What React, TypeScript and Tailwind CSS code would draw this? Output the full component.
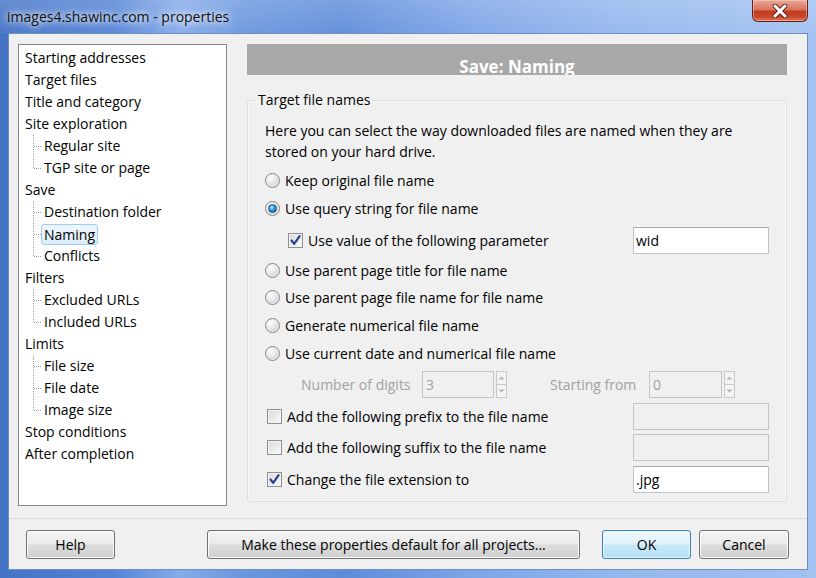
import React from "react";

type Node = { t: string; c?: string[] };

const tree: Node[] = [
  { t: "Starting addresses" },
  { t: "Target files" },
  { t: "Title and category" },
  { t: "Site exploration", c: ["Regular site", "TGP site or page"] },
  { t: "Save", c: ["Destination folder", "Naming", "Conflicts"] },
  { t: "Filters", c: ["Excluded URLs", "Included URLs"] },
  { t: "Limits", c: ["File size", "File date", "Image size"] },
  { t: "Stop conditions" },
  { t: "After completion" },
];

function Connector({ last }: { last: boolean }) {
  return (
    <svg width="19" height="22" viewBox="0 0 19 22" className="shrink-0">
      <line x1="8.5" y1="0" x2="8.5" y2={last ? 11.5 : 22} stroke="#a0a0a0" strokeDasharray="1 1" />
      <line x1="9" y1="11.5" x2="17" y2="11.5" stroke="#a0a0a0" strokeDasharray="1 1" />
    </svg>
  );
}

function Radio({ checked }: { checked?: boolean }) {
  return (
    <span className="w-[15px] h-[15px] rounded-full border border-[#848585] bg-[radial-gradient(circle_at_35%_30%,#ffffff_0%,#e6e6e6_45%,#c2c2c2_100%)] flex items-center justify-center shrink-0 shadow-[inset_0_0_0_1px_#f2f2f2]">
      {checked && (
        <span className="w-[9px] h-[9px] rounded-full bg-[radial-gradient(circle_at_40%_35%,#b6ecff_0%,#3aa0dc_40%,#0f4f90_100%)] border border-[#1d4f86]" />
      )}
    </span>
  );
}

function Check({ checked }: { checked?: boolean }) {
  return (
    <span className="w-[15px] h-[15px] border border-[#8e8f8f] bg-[linear-gradient(135deg,#d9d9d9_0%,#ededed_60%,#fbfbfb_100%)] shadow-[inset_0_0_0_1px_#f4f4f4] flex items-center justify-center shrink-0">
      {checked && (
        <svg width="13" height="13" viewBox="0 0 13 13">
          <path d="M2.5 6.5 L5.2 9.8 L10.6 2.2" fill="none" stroke="#26448c" strokeWidth="2.2" strokeLinecap="round" strokeLinejoin="round" />
        </svg>
      )}
    </span>
  );
}

function TextBox({ value, disabled }: { value?: string; disabled?: boolean }) {
  return (
    <div
      className={
        "w-[136px] h-[27px] border flex items-center pl-[2px] text-[14px] " +
        (disabled ? "bg-[#f0f0f0] border-[#c5c5c5]" : "bg-white border-[#c0c4c8] border-t-[#a6aab0]")
      }
    >
      {value}
    </div>
  );
}

function Spin() {
  return (
    <div className="w-[11px] h-[27px] flex flex-col ml-[2px]">
      <div className="flex-1 border border-[#c9c9c9] bg-[#f4f4f4] flex items-center justify-center">
        <svg width="7" height="4" viewBox="0 0 7 4">
          <path d="M0.5 3.5 L3.5 0.5 L6.5 3.5 Z" fill="#b5b5b5" />
        </svg>
      </div>
      <div className="flex-1 border border-t-0 border-[#c9c9c9] bg-[#f4f4f4] flex items-center justify-center">
        <svg width="7" height="4" viewBox="0 0 7 4">
          <path d="M0.5 0.5 L3.5 3.5 L6.5 0.5 Z" fill="#b5b5b5" />
        </svg>
      </div>
    </div>
  );
}

function RadioRow({ label, checked, h }: { label: string; checked?: boolean; h: string }) {
  return (
    <div className={"flex items-center " + h}>
      <Radio checked={checked} />
      <span className="ml-[5px]">{label}</span>
    </div>
  );
}

function Button({ label, w, def }: { label: string; w: string; def?: boolean }) {
  return (
    <div
      className={
        "h-[29px] rounded-[3px] border flex items-center justify-center text-[14px] " +
        w +
        " " +
        (def
          ? "border-[#3c7fb1] bg-[linear-gradient(180deg,#eef8fd_0%,#e0f2fc_48%,#c8e8fa_52%,#b4dff6_100%)] shadow-[inset_0_0_0_1px_#e8f6fe]"
          : "border-[#707070] bg-[linear-gradient(180deg,#f3f3f3_0%,#ebebeb_48%,#dddddd_52%,#cfcfcf_100%)] shadow-[inset_0_0_0_1px_#fbfbfb]")
      }
    >
      {label}
    </div>
  );
}

export default function App() {
  return (
    <div className="w-[816px] h-[578px] overflow-hidden flex flex-col font-['Open_Sans',sans-serif] text-[14px] text-black bg-[linear-gradient(90deg,#4473c6_0%,#5584d6_14%,#86abe9_22%,#6a96de_30%,#5e8cda_42%,#7ea5e8_58%,#94b7ee_76%,#a3c1f1_100%)]">
      {/* Title bar */}
      <div className="h-[33px] flex shrink-0 bg-[linear-gradient(180deg,rgba(255,255,255,0.18)_0%,rgba(255,255,255,0.05)_100%)]">
        <div className="pl-[7px] pt-[6px] text-[14px] leading-[22px] text-[#111] [text-shadow:0_0_6px_#ffffff,0_0_10px_rgba(255,255,255,0.8)]">
          images4.shawinc.com - properties
        </div>
        <div className="ml-auto mr-[8px] w-[56px] h-[22px] rounded-b-[6px] border border-t-0 border-[#6b1f17] bg-[linear-gradient(180deg,#e9a99a_0%,#d9755f_45%,#c13a22_55%,#c8482d_80%,#e07a58_100%)] shadow-[inset_0_0_0_1px_rgba(255,210,200,0.5)] flex items-center justify-center">
          <svg width="16" height="14" viewBox="0 0 16 14">
            <path d="M3 2 L13 12 M13 2 L3 12" stroke="#5a1a12" strokeWidth="4.6" strokeLinecap="round" />
            <path d="M3 2 L13 12 M13 2 L3 12" stroke="#ffffff" strokeWidth="3" strokeLinecap="round" />
          </svg>
        </div>
      </div>

      {/* Client area */}
      <div className="mx-[8px] mb-[8px] flex-1 bg-[#f0f0f0] border border-[#6f8fc4] flex flex-col">
        <div className="flex pt-[10px] pl-[9px]">
          {/* Tree */}
          <div className="w-[209px] h-[462px] bg-white border border-[#828790] pl-[6px] pt-[2px] leading-[22px]">
            {tree.map((n) => (
              <div key={n.t}>
                <div className="h-[22px]">{n.t}</div>
                {n.c?.map((ch, i) => (
                  <div key={ch} className="flex h-[22px] items-center">
                    <Connector last={i === n.c!.length - 1} />
                    {ch === "Naming" ? (
                      <span className="-ml-[3px] h-[21px] leading-[19px] px-[2px] border border-[#9fcdee] rounded-[3px] bg-[linear-gradient(180deg,#eef7fd_0%,#dcedfa_100%)]">
                        {ch}
                      </span>
                    ) : (
                      <span>{ch}</span>
                    )}
                  </div>
                ))}
              </div>
            ))}
          </div>

          {/* Right panel */}
          <div className="ml-[20px] w-[540px] flex flex-col">
            <div className="h-[31px] bg-[#a8a8a8] overflow-hidden text-center text-white font-bold text-[17px] leading-[24px] pt-[11px]">
              Save: Naming
            </div>
            <fieldset className="mt-[15px] h-[412px] border border-[#d5dfe5] rounded-[3px] shadow-[inset_0_0_0_1px_#fbfbfb]">
              <legend className="ml-[8px] px-[2px] leading-[20px]">Target file names</legend>
              <div className="pl-[17px]">
                <div className="mt-[10px] leading-[21px] w-[500px]">
                  Here you can select the way downloaded files are named when they are stored on your hard drive.
                </div>
                <div className="mt-[4px]">
                  <RadioRow label="Keep original file name" h="h-[28px]" />
                  <RadioRow label="Use query string for file name" checked h="h-[28px]" />
                  <div className="flex items-center h-[36px] pl-[23px]">
                    <Check checked />
                    <span className="ml-[5px] w-[325px]">Use value of the following parameter</span>
                    <TextBox value="wid" />
                  </div>
                  <RadioRow label="Use parent page title for file name" h="h-[25px]" />
                  <RadioRow label="Use parent page file name for file name" h="h-[28px]" />
                  <RadioRow label="Generate numerical file name" h="h-[28px]" />
                  <RadioRow label="Use current date and numerical file name" h="h-[29px]" />
                  <div className="flex items-center h-[32px] pl-[36px] text-[#a2a2a2]">
                    <span className="w-[121px]">Number of digits</span>
                    <div className="w-[72px] h-[27px] border border-[#c3c6c9] bg-[#f0f0f0] pl-[3px] flex items-center">3</div>
                    <Spin />
                    <span className="ml-[43px] w-[99px]">Starting from</span>
                    <div className="w-[73px] h-[27px] border border-[#c3c6c9] bg-[#f0f0f0] pl-[3px] flex items-center">0</div>
                    <Spin />
                  </div>
                  <div className="flex items-center h-[33px] pl-[2px]">
                    <Check />
                    <span className="ml-[5px] w-[346px]">Add the following prefix to the file name</span>
                    <TextBox disabled />
                  </div>
                  <div className="flex items-center h-[28px] pl-[2px]">
                    <Check />
                    <span className="ml-[5px] w-[346px]">Add the following suffix to the file name</span>
                    <TextBox disabled />
                  </div>
                  <div className="flex items-center h-[36px] pl-[2px]">
                    <Check checked />
                    <span className="ml-[5px] w-[346px]">Change the file extension to</span>
                    <TextBox value=".jpg" />
                  </div>
                </div>
              </div>
            </fieldset>
          </div>
        </div>

        {/* Separator */}
        <div className="mt-[12px] h-[1px] bg-[#dadada]" />

        {/* Buttons */}
        <div className="flex mt-[11px] pl-[17px]">
          <Button label="Help" w="w-[89px]" />
          <Button label="Make these properties default for all projects..." w="w-[373px] ml-[92px]" />
          <Button label="OK" w="w-[89px] ml-[22px]" def />
          <Button label="Cancel" w="w-[90px] ml-[8px]" />
        </div>
      </div>
    </div>
  );
}
